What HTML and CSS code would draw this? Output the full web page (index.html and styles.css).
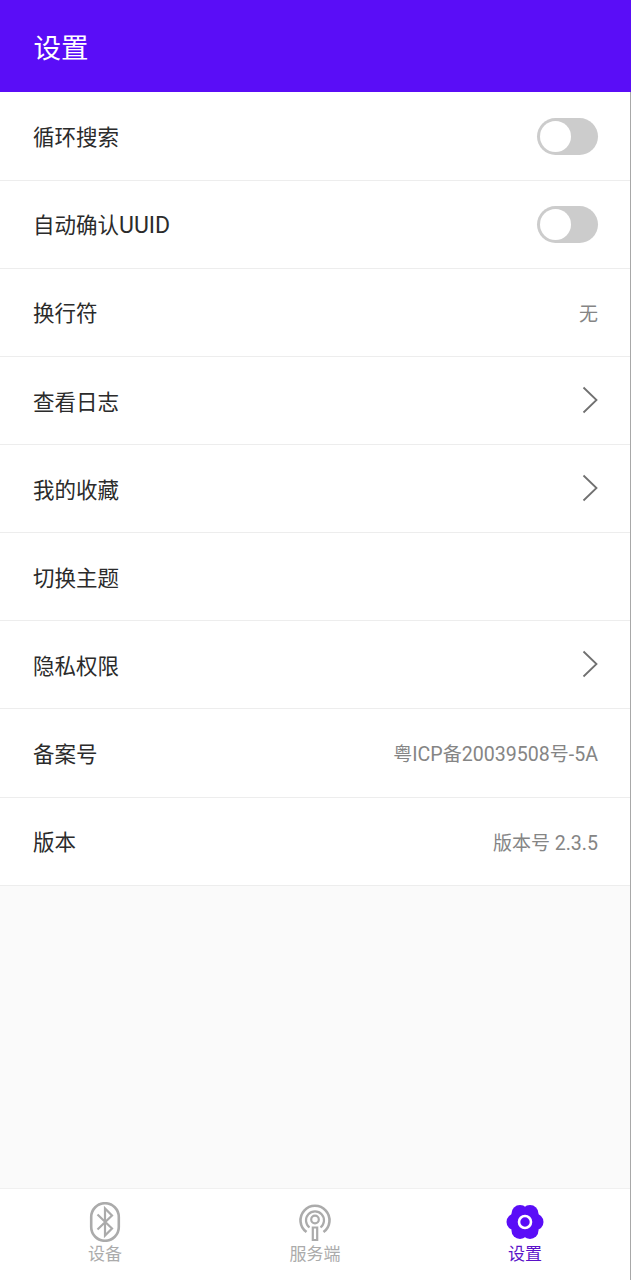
FILE: index.html
```html
<!DOCTYPE html>
<html lang="zh-CN">
<head>
    <meta charset="UTF-8">
    <meta name="viewport" content="width=device-width, initial-scale=1.0">
    <title>设置</title>
    <link rel="stylesheet" href="styles.css">
</head>
<body>
    <div class="container">
        <header class="title-bar">设置</header>

        <!-- Settings list -->
        <div class="settings">
            <div class="row">
                <span class="label">循环搜索</span>
                <span class="switch"><span class="knob"></span></span>
            </div>
            <div class="row">
                <span class="label">自动确认<span class="latin">UUID</span></span>
                <span class="switch"><span class="knob"></span></span>
            </div>
            <div class="row">
                <span class="label">换行符</span>
                <span class="value">无</span>
            </div>
            <div class="row">
                <span class="label">查看日志</span>
                <svg class="arrow" viewBox="0 0 16 28"><path d="M1.5 1.5 14.5 14 1.5 26.5"/></svg>
            </div>
            <div class="row">
                <span class="label">我的收藏</span>
                <svg class="arrow" viewBox="0 0 16 28"><path d="M1.5 1.5 14.5 14 1.5 26.5"/></svg>
            </div>
            <div class="row">
                <span class="label">切换主题</span>
            </div>
            <div class="row">
                <span class="label">隐私权限</span>
                <svg class="arrow" viewBox="0 0 16 28"><path d="M1.5 1.5 14.5 14 1.5 26.5"/></svg>
            </div>
            <div class="row">
                <span class="label">备案号</span>
                <span class="value">粤<span class="latin">ICP</span>备<span class="latin">20039508</span>号<span class="latin">-5A</span></span>
            </div>
            <div class="row">
                <span class="label">版本</span>
                <span class="value">版本号 <span class="latin">2.3.5</span></span>
            </div>
        </div>

        <!-- Bottom navigation -->
        <nav class="tabs">
            <div class="tab">
                <svg class="tab-icon" viewBox="0 0 40 40">
                    <rect x="6.2" y="1.2" width="27.6" height="37.6" rx="13.8" class="line"/>
                    <path d="M12.5 12.5 27 26.5 20 33.5V6.5L27 13.5 12.5 27.5" class="line thin"/>
                </svg>
                <span>设备</span>
            </div>
            <div class="tab">
                <svg class="tab-icon" viewBox="0 0 40 40">
                    <path d="M11.5 30A14.5 14.5 0 1 1 28.5 30" class="line"/>
                    <path d="M14.5 25.5A9 9 0 1 1 25.5 25.5" class="line thin"/>
                    <circle cx="20" cy="17.5" r="3.8" class="line thin"/>
                    <path d="M17.8 38V25.5H22.2V38Z" class="line thin"/>
                </svg>
                <span>服务端</span>
            </div>
            <div class="tab active">
                <svg class="tab-icon" viewBox="0 0 40 40">
                    <g class="gear">
                        <circle cx="20" cy="20" r="13.5"/>
                        <circle cx="30" cy="20" r="8.5"/>
                        <circle cx="10" cy="20" r="8.5"/>
                        <circle cx="25" cy="11.4" r="8.5"/>
                        <circle cx="15" cy="11.4" r="8.5"/>
                        <circle cx="25" cy="28.6" r="8.5"/>
                        <circle cx="15" cy="28.6" r="8.5"/>
                    </g>
                    <circle cx="20" cy="20" r="6" class="hole"/>
                </svg>
                <span>设置</span>
            </div>
        </nav>
    </div>
</body>
</html>
```

FILE: styles.css
```css
* {
    margin: 0;
    padding: 0;
    box-sizing: border-box;
    font-family: 'Roboto', 'Noto Sans CJK SC', sans-serif;
}

body {
    background-color: #fafafa;
    height: 1280px;
    overflow: hidden;
}

.container {
    height: 1280px;
    display: flex;
    flex-direction: column;
    border-right: 1px solid #a8a8a8;
}

.title-bar {
    height: 92px;
    margin-right: -1px;
    padding: 0 33.5px;
    display: flex;
    align-items: center;
    background: #5a0df7;
    color: white;
    font-size: 27.5px;
}

.settings {
    flex: 1;
}

.row {
    height: 88.13px;
    display: flex;
    align-items: center;
    justify-content: space-between;
    padding: 0 32px 0 33px;
    background: white;
    border-bottom: 1px solid #ededed;
}

.row:first-child {
    height: 88.63px;
}

.label {
    margin-bottom: 0.8px;
    font-size: 21.5px;
    color: #2b2b2b;
}

.label .latin {
    font-size: 23px;
}

.value {
    font-size: 19px;
    color: #858585;
}

.value .latin {
    font-size: 19.6px;
}

.switch {
    width: 61px;
    height: 37px;
    margin-top: 0.5px;
    padding: 3px;
    border-radius: 19px;
    background: #cccccc;
}

.knob {
    display: block;
    width: 31px;
    height: 31px;
    border-radius: 50%;
    background: white;
}

.arrow {
    width: 16px;
    height: 28px;
    margin-bottom: 1px;
    fill: none;
    stroke: #707070;
    stroke-width: 1.8;
}

.tabs {
    height: 92.4px;
    display: flex;
    justify-content: space-around;
    background: white;
    border-top: 1px solid #f0f0f0;
}

.tab {
    width: 210px;
    display: flex;
    flex-direction: column;
    align-items: center;
    padding-top: 13.5px;
    font-size: 17px;
    line-height: 25px;
    color: #ababab;
}

.tab-icon {
    width: 40px;
    height: 40px;
}

.line {
    fill: none;
    stroke: #ababab;
    stroke-width: 2.6;
}

.thin {
    stroke-width: 2.2;
}

.active {
    color: #5a12c8;
}

.gear {
    fill: #5a0df7;
}

.hole {
    fill: none;
    stroke: white;
    stroke-width: 2.6;
}
```
